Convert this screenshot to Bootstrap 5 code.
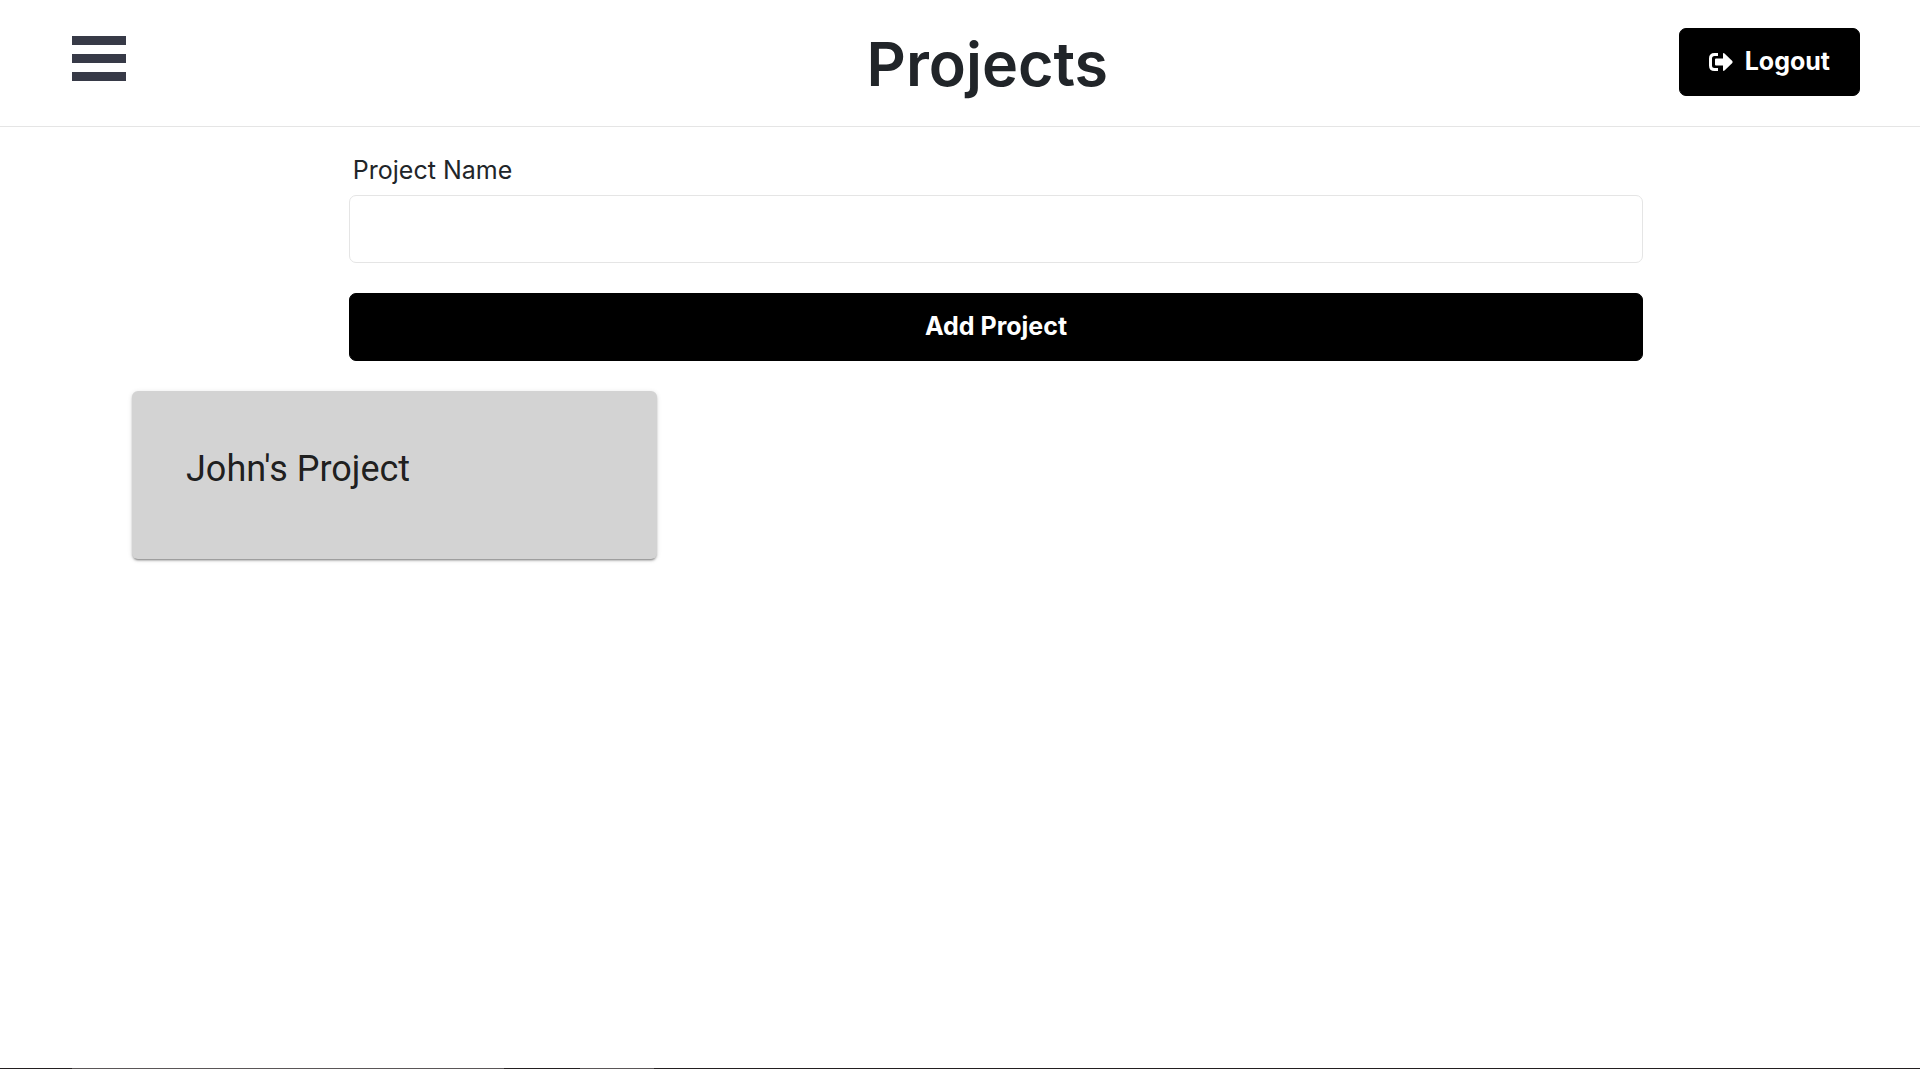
<!DOCTYPE html>
<html lang="en">
<head>
<meta charset="utf-8">
<meta name="viewport" content="width=device-width, initial-scale=1">
<title>Projects</title>
<link href="https://cdn.jsdelivr.net/npm/bootstrap@5.3.0/dist/css/bootstrap.min.css" rel="stylesheet">
<style>
body { font-family: Inter, "Open Sans", sans-serif; background: #fff; color: #212529; }
.top-bar { height: 127px; border-bottom: 1px solid #e5e5e5; padding: 28px 60px 0 72px; }
.menu-side { width: 224px; padding-top: 8px; }
.burger { width: 54px; height: 45px; background: none; }
.burger span { height: 9px; background: #373a47; }
.page-title { font-size: 61px; line-height: 72px; font-weight: 600; }
.btn-main { --bs-btn-color: #fff; --bs-btn-bg: #000; --bs-btn-border-color: #000; --bs-btn-hover-color: #fff; --bs-btn-hover-bg: #222; --bs-btn-font-weight: 700; --bs-btn-font-size: 25px; --bs-btn-border-radius: 7px; --bs-btn-padding-x: 29px; height: 68px; }
.logout-icon { width: 24px; height: 20px; }
.page-body { width: 90%; margin: 24px 60px 0 auto; }
.project-form { width: 74.9%; margin-bottom: 30px; }
.name-label { font-size: 25px; line-height: 38px; padding-left: 4px; margin-bottom: 6px; }
.name-box { height: 68px; margin-bottom: 30px; border-color: #e5e5e5; border-radius: 7px; font-size: 25px; background: #fff; }
.project-card { width: 30.4%; height: 168px; padding: 54px; border-radius: 6px; background: #d3d3d3; box-shadow: 0 3px 1px -2px rgba(0,0,0,.2), 0 2px 2px 0 rgba(0,0,0,.2), 0 1px 5px 0 rgba(0,0,0,.12); }
.project-name { font-family: Roboto, sans-serif; font-size: 36px; line-height: 48px; color: rgba(0,0,0,.87); }
.task-strip { height: 1px; background: #231f20; }
.task-strip span { background: #5a5657; }
.strip-a { width: 432px; margin-left: 72px; }
.strip-b { width: 74px; margin-left: 76px; }
</style>
</head>
<body class="min-vh-100 d-flex flex-column">
<header class="top-bar d-flex align-items-start">
  <div class="menu-side">
    <button type="button" class="burger border-0 p-0 d-flex flex-column justify-content-between" aria-label="Open menu"><span class="w-100"></span><span class="w-100"></span><span class="w-100"></span></button>
  </div>
  <h1 class="page-title flex-grow-1 text-center mb-0">Projects</h1>
  <button type="button" class="btn btn-main d-flex align-items-center gap-2">
    <svg class="logout-icon" viewBox="0 0 24 20" fill="none" aria-hidden="true">
      <path d="M9 2.500H5.500Q1.500 2.500 1.500 6.500V13.500Q1.500 17.500 5.500 17.500H9" stroke="#fff" stroke-width="3"/>
      <path d="M7 6.500H14V2Q14 .5 15.500 1.500L23.300 9Q24 10 23.300 11L15.500 18.500Q14 19.500 14 18V13.500H7Q6 13.500 6 12.500V7.500Q6 6.500 7 6.500Z" fill="#fff"/>
    </svg><span class="ms-1">Logout</span></button>
</header>
<main class="page-body">
  <form class="project-form mx-auto">
    <label for="projectName" class="name-label d-block">Project Name</label>
    <input id="projectName" type="text" class="form-control name-box">
    <button type="button" class="btn btn-main w-100">Add Project</button>
  </form>
  <article class="project-card">
    <h2 class="project-name fw-normal mb-0">John's Project</h2>
  </article>
</main>
<footer class="task-strip d-flex mt-auto"><span class="strip-a"></span><span class="strip-b"></span></footer>
<script src="https://cdn.jsdelivr.net/npm/bootstrap@5.3.0/dist/js/bootstrap.bundle.min.js"></script>
</body>
</html>
